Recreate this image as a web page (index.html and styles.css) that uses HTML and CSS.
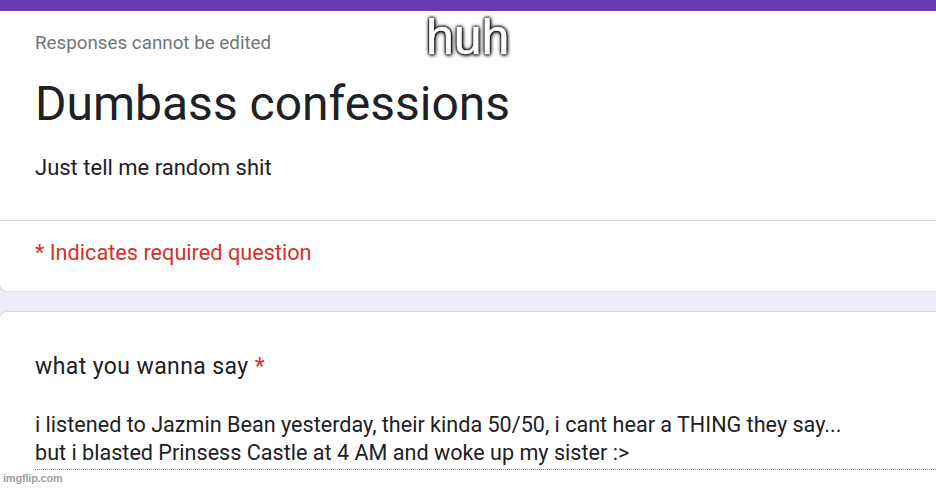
FILE: index.html
```html
<!DOCTYPE html>
<html>
<head>
<meta charset="utf-8">
<link rel="stylesheet" href="styles.css">
</head>
<body>
<div class="page">
  <div class="card head-card">
    <div class="topbar"></div>
    <div class="head-body">
      <div class="note">Responses cannot be edited</div>
      <h1 class="title">Dumbass confessions</h1>
      <div class="desc">Just tell me random shit</div>
    </div>
    <div class="required">* Indicates required question</div>
  </div>
  <div class="card question">
    <div class="q-title">what you wanna say <span class="star">*</span></div>
    <div class="answer">i listened to Jazmin Bean yesterday, their kinda 50/50, i cant hear a THING they say...<br>but i blasted Prinsess Castle at 4 AM and woke up my sister :&gt;</div>
  </div>
</div>
<div class="caption">huh</div>
<div class="watermark">imgflip.com</div>
</body>
</html>
```

FILE: styles.css
```css
html, body {
  margin: 0;
  padding: 0;
}
body {
  width: 936px;
  height: 488px;
  overflow: hidden;
  background: #efebf8;
  font-family: Roboto, "Noto Sans", sans-serif;
  color: #202124;
  position: relative;
}
.page {
  display: flex;
  flex-direction: column;
  gap: 19px;
  margin-left: -1px;
  width: 950px;
}
.card {
  background: #fff;
  border: 1px solid #dadce0;
  border-radius: 8px;
}
.head-card {
  border-top: none;
  border-radius: 0 0 8px 8px;
  overflow: hidden;
}
.topbar {
  height: 11px;
  background: #673ab7;
}
.head-body {
  padding: 21px 0 0 35px;
  height: 210px;
  border-bottom: 1px solid #dadce0;
  box-sizing: border-box;
}
.note {
  font-size: 18.8px;
  color: #70757a;
  line-height: 22px;
}
.title {
  margin: 22px 0 0;
  font-weight: 400;
  font-size: 48px;
  line-height: 56px;
  color: #202124;
}
.desc {
  margin-top: 22px;
  font-size: 22px;
  line-height: 28px;
}
.required {
  padding: 17.5px 0 0 35px;
  height: 70px;
  box-sizing: border-box;
  font-size: 21.7px;
  line-height: 28px;
  color: #d93025;
}
.question {
  height: 200px;
  padding: 40px 0 0 35px;
  box-sizing: border-box;
  border-bottom: none;
  border-radius: 8px 8px 0 0;
}
.q-title {
  font-size: 23px;
  letter-spacing: 0.4px;
  line-height: 30px;
  color: #202124;
}
.star {
  color: #d93025;
}
.answer {
  margin-top: 28.5px;
  font-size: 21.6px;
  line-height: 28px;
  color: #202124;
  padding-bottom: 2px;
  border-bottom: 1px dotted #80868b;
}
.caption {
  position: absolute;
  left: 426px;
  top: 12px;
  font-family: "Liberation Sans", Arial, sans-serif;
  font-size: 50px;
  line-height: 50px;
  color: #fff;
  -webkit-text-stroke: 0.6px #fff;
  text-shadow: 0 0 2px #000, 0 0 2px #000, 0 0 3px #000, 0 0 4px #000, 1px 1px 4px #000;
}
.watermark {
  position: absolute;
  left: 3px;
  top: 472px;
  font-family: "Liberation Sans", Arial, sans-serif;
  font-size: 11px;
  font-weight: 700;
  color: #a0a0a0;
  letter-spacing: -0.2px;
}
```
